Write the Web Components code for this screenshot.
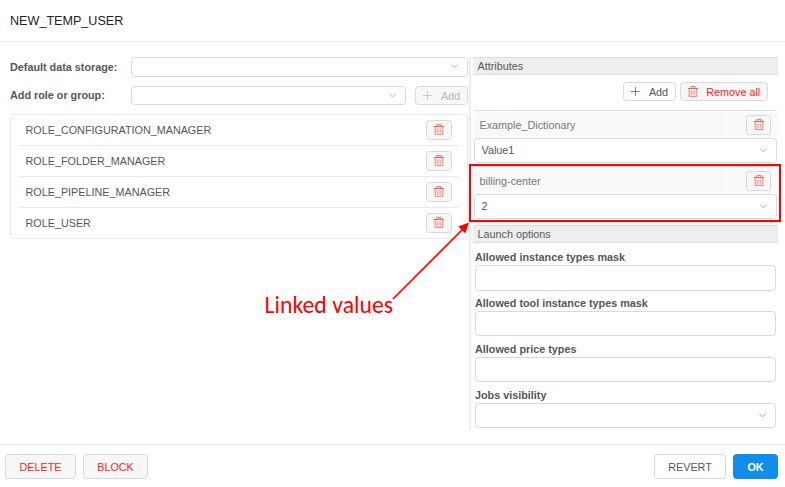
<!DOCTYPE html>
<html lang="en">
<head>
<meta charset="utf-8">
<title>NEW_TEMP_USER</title>
<style>
html,body{margin:0;width:785px;height:487px;overflow:hidden;background:#fff}
body{font:10.8px/16px Arial,"Liberation Sans",sans-serif;color:#565656}
</style>
</head>
<body>
<user-dialog></user-dialog>
<script>
const define = (name, html, setup) => {
  const t = document.createElement('template');
  t.innerHTML = html;
  customElements.define(name, class extends HTMLElement {
    constructor() {
      super();
      this.attachShadow({mode: 'open'}).append(t.content.cloneNode(true));
    }
    connectedCallback() { if (setup) setup(this, this.shadowRoot); }
  });
};

define('icon-trash', `<style>:host{display:block;width:10px;height:11px;margin-bottom:1px;white-space:normal}svg{display:block}</style>
<svg width="10" height="11" viewBox="0 0 10 11" fill="none" stroke="#f04134">
<path d="M0 2.5H10" opacity=".85"/><path d="M2.9 2V.6H7.1V2" stroke-width=".9" opacity=".85"/>
<path d="M1.2 3V10.4H8.8V3" stroke-width=".9" opacity=".75"/><path d="M3.3 4.5V9M5 4.5V9M6.7 4.5V9" stroke-width=".7" opacity=".7"/></svg>`);

define('icon-plus', `<style>:host{display:block;width:9px;height:9px;margin-bottom:1px;white-space:normal}svg{display:block}</style>
<svg width="9" height="9" viewBox="0 0 9 9" stroke="currentColor" stroke-width="1" opacity=".75"><path d="M4.5 0V9M0 4.5H9"/></svg>`);

define('select-box', `<style>
:host{display:flex;align-items:center;justify-content:space-between;box-sizing:border-box;height:25px;border:1px solid #d9d9d9;border-radius:3.5px;background:#fff;padding:0 10px 0 7px}
svg{display:block;flex:none}
:host([plain]) svg{display:none}
</style><span><slot></slot></span><svg width="7" height="5" viewBox="0 0 7 5" fill="none" stroke="#aaa" stroke-width=".9"><path d="M.3.5 3.5 4 6.7.5"/></svg>`);

define('push-button', `<style>
:host{display:flex;align-items:center;justify-content:center;box-sizing:border-box;height:25px;border:1px solid #d9d9d9;border-radius:3.5px;background:#fff;white-space:nowrap}
:host([kind=danger]){background:#f7f7f7;color:#f5222d}
:host([kind=disabled]){background:#f7f7f7;color:#b9b9b9}
:host([kind=primary]){background:#108ee9;border-color:#108ee9;color:#fff;font-weight:bold}
:host([small]){height:19px}
:host([icon]){width:26px;height:20px}
</style><slot></slot>`);

define('role-row', `<style>
:host{display:flex;align-items:center;justify-content:space-between;box-sizing:border-box;height:31px;margin:0 8px 0 7px;padding:0 7px 0 7.5px;border-bottom:1px solid #e9e9e9}
:host(:last-child){border-color:transparent}
</style><span><slot></slot></span><push-button kind="danger" icon><icon-trash></icon-trash></push-button>`);

define('section-title', `<style>
:host{display:flex;align-items:center;box-sizing:border-box;height:18px;width:305px;padding-left:4.5px;background:#eee;border:solid #dcdcdc;border-width:1px 0}
</style><slot></slot>`);

define('attribute-entry', `<style>
:host{display:block;width:303px;height:56px;margin-left:1px;box-sizing:border-box;border-top:1px solid #dcdcdc;padding-top:2px}
.row{display:flex;gap:1px;height:24px;margin-bottom:1px;color:#777}
.name{width:252px;background:#f9f9f9;padding:4px 0 0 5.5px;box-sizing:border-box}
.act{flex:1;background:#f9f9f9;display:flex;align-items:center;justify-content:flex-end;padding-right:6px}
push-button{width:25px}
select-box{height:25px;padding:0 9px 0 6.5px}
select-box span{display:block;margin-bottom:2px}
</style><div class="row"><div class="name"></div><div class="act"><push-button kind="danger" icon><icon-trash></icon-trash></push-button></div></div>
<select-box><span><slot></slot></span></select-box>`, (el, root) => { root.querySelector('.name').textContent = el.getAttribute('name'); });

define('option-field', `<style>
:host{display:block;width:301px;height:46px;margin-left:2px}
label{display:block;font-weight:bold;height:16px}
select-box{height:25px;padding-right:9px}
:host(:first-child) select-box{height:26px}
</style><label><slot></slot></label><select-box></select-box>`, (el, root) => {
  if (!el.hasAttribute('dropdown')) root.querySelector('select-box').setAttribute('plain', '');
});

define('callout-overlay', `<style>
:host{position:absolute;inset:0;pointer-events:none;color:#f00}
.box{position:absolute;left:469px;top:164px;width:312px;height:58px;box-sizing:border-box;border:2px solid #f00}
.text{position:absolute;left:264.5px;top:290px;font:23.8px/30px Calibri,Carlito,Lato,sans-serif;white-space:nowrap}
svg{position:absolute;left:0;top:0}
</style><div class="box"></div><div class="text">Linked values</div>
<svg width="785" height="487"><path d="M393 299 463 229" stroke="#f00" stroke-width="1.7"/><path d="M469 222.5 465.3 233.5 458.2 226.4Z" fill="#f00"/></svg>`);

define('user-dialog', `<style>
:host{display:flex;flex-direction:column;position:relative;width:785px;height:487px}
header{height:42px;box-sizing:border-box;border-bottom:1px solid #e9e9e9;font-size:12.6px;line-height:20px;padding:11px 0 0 10px;color:#222}
main{display:flex;height:402px;padding-top:15px;box-sizing:border-box}
.left{width:458px;margin-left:10px}
.line{display:flex;align-items:center}
.line b{width:121px;flex:none}
.line select-box{flex:1}
.first select-box{height:20px;padding:0 9px 2px 7px}
.second{height:19px;margin:9px 0}
.second b{height:18px}
.second select-box{height:19px;flex:none;width:275px;margin-right:9px;box-sizing:border-box;padding-right:9px}
.second push-button{width:53px}
.list{height:125px;box-sizing:border-box;border:1px solid #e9e9e9;border-radius:3.5px}
.split{width:2px;height:373px;margin:0 2px 0 1px;background:#ececec}
.tools{display:flex;gap:4px;justify-content:flex-end;width:295px;margin:7px 0 9px}
.tools push-button:first-child{width:53px}
.tools push-button:last-child{width:88px}
icon-plus{margin-right:9px}
.tools icon-plus{margin-right:9px}
.tools icon-trash{margin-right:8.5px}
.end{height:3px;width:303px;margin-left:1px;box-sizing:border-box;border-top:1px solid #e4e4e4}
.fields{padding-top:6px}
footer{display:flex;gap:7px;height:43px;box-sizing:border-box;border-top:1px solid #e9e9e9;padding:9px 7px 0 5px}
.grow{flex:1}
</style>
<header>NEW_TEMP_USER</header>
<main>
<section class="left">
<div class="line first"><b>Default data storage:</b><select-box></select-box></div>
<div class="line second"><b>Add role or group:</b><select-box></select-box><push-button kind="disabled" small><icon-plus></icon-plus>Add</push-button></div>
<div class="list"><role-row>ROLE_CONFIGURATION_MANAGER</role-row><role-row>ROLE_FOLDER_MANAGER</role-row><role-row>ROLE_PIPELINE_MANAGER</role-row><role-row>ROLE_USER</role-row></div>
</section>
<div class="split"></div>
<section>
<section-title>Attributes</section-title>
<div class="tools"><push-button small><icon-plus></icon-plus>Add</push-button><push-button kind="danger" small><icon-trash></icon-trash>Remove all</push-button></div>
<attribute-entry name="Example_Dictionary">Value1</attribute-entry>
<attribute-entry name="billing-center">2</attribute-entry>
<div class="end"></div>
<section-title>Launch options</section-title>
<div class="fields"><option-field>Allowed instance types mask</option-field><option-field>Allowed tool instance types mask</option-field><option-field>Allowed price types</option-field><option-field dropdown>Jobs visibility</option-field></div>
</section>
</main>
<footer><push-button kind="danger" style="width:71px">DELETE</push-button><push-button kind="danger" style="width:65px">BLOCK</push-button><div class="grow"></div><push-button style="width:72px">REVERT</push-button><push-button kind="primary" style="width:45px">OK</push-button></footer>
<callout-overlay></callout-overlay>`);
</script>
</body>
</html>
